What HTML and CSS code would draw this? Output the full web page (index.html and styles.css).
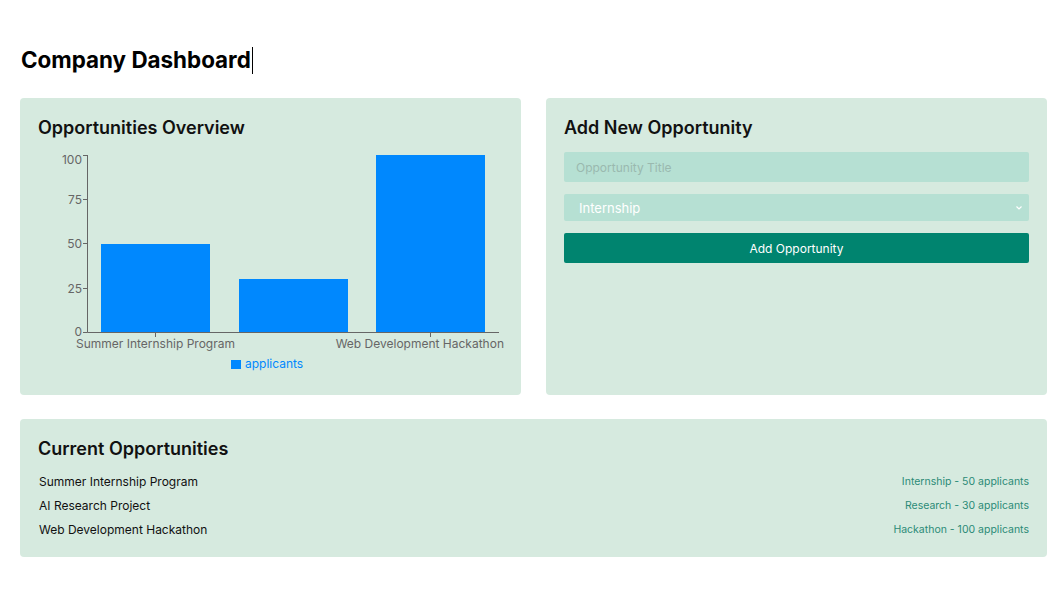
FILE: index.html
```html
<!DOCTYPE html>
<html>
<head>
<meta charset="utf-8">
<link rel="stylesheet" href="styles.css">
</head>
<body>
<div class="page">
  <h1 class="page-title">Company Dashboard<span class="caret"></span></h1>
  <div class="grid">
    <section class="card">
      <h2 class="card-title">Opportunities Overview</h2>
      <svg class="chart" width="470" height="230" viewBox="0 0 470 230">
        <g class="bars" fill="#0088fe">
          <rect x="63" y="99" width="109" height="88"/>
          <rect x="201" y="134" width="109" height="53"/>
          <rect x="338" y="10" width="109" height="177"/>
        </g>
        <g stroke="#666" stroke-width="1" fill="none">
          <line x1="49.5" y1="10" x2="49.5" y2="187.5"/>
          <line x1="49.5" y1="187.5" x2="461" y2="187.5"/>
          <line x1="45" y1="10.5" x2="49.5" y2="10.5"/>
          <line x1="45" y1="54.5" x2="49.5" y2="54.5"/>
          <line x1="45" y1="98.5" x2="49.5" y2="98.5"/>
          <line x1="45" y1="143.5" x2="49.5" y2="143.5"/>
          <line x1="45" y1="187.5" x2="49.5" y2="187.5"/>
          <line x1="117.5" y1="187.5" x2="117.5" y2="192"/>
          <line x1="392.5" y1="187.5" x2="392.5" y2="192"/>
        </g>
        <g class="tick" text-anchor="end">
          <text x="44" y="19">100</text>
          <text x="44" y="59">75</text>
          <text x="44" y="103">50</text>
          <text x="44" y="148">25</text>
          <text x="44" y="190.5">0</text>
        </g>
        <g class="tick">
          <text x="117.5" y="203" text-anchor="middle">Summer Internship Program</text>
          <text x="466" y="203" text-anchor="end">Web Development Hackathon</text>
        </g>
        <rect x="193" y="215" width="10" height="9" fill="#0088fe"/>
        <text class="legend" x="207" y="223">applicants</text>
      </svg>
    </section>
    <section class="card">
      <h2 class="card-title">Add New Opportunity</h2>
      <form class="form">
        <input class="field" type="text" placeholder="Opportunity Title">
        <div class="select">
          <span>Internship</span>
          <svg width="8" height="6" viewBox="0 0 8 6"><path d="M1.5 1.5 L4 4 L6.5 1.5" stroke="#fff" stroke-width="1.2" fill="none"/></svg>
        </div>
        <button class="btn" type="button">Add Opportunity</button>
      </form>
    </section>
  </div>
  <section class="card list-card">
    <h2 class="card-title">Current Opportunities</h2>
    <ul class="list">
      <li><span class="name">Summer Internship Program</span><span class="meta">Internship - 50 applicants</span></li>
      <li><span class="name">AI Research Project</span><span class="meta">Research - 30 applicants</span></li>
      <li><span class="name">Web Development Hackathon</span><span class="meta">Hackathon - 100 applicants</span></li>
    </ul>
  </section>
</div>
</body>
</html>
```

FILE: styles.css
```css
* { box-sizing: border-box; }
body {
  margin: 0;
  background: #fff;
  font-family: Inter, "Noto Sans", sans-serif;
  color: #111;
}
.page {
  width: 1047px;
  padding: 44px 0 0 20px;
}
.page-title {
  margin: 0 0 22px 1px;
  font-size: 22.4px;
  line-height: 32px;
  font-weight: 700;
  color: #000;
}
.caret {
  display: inline-block;
  width: 1px;
  height: 27px;
  margin-left: 1px;
  background: #000;
  vertical-align: -6px;
}
.grid {
  display: grid;
  grid-template-columns: 501px 501px;
  gap: 25px;
  margin-bottom: 24px;
}
.card {
  background: #d6eadf;
  border-radius: 4px;
  padding: 18px 18px 20px;
}
.card-title {
  margin: 0;
  font-size: 18px;
  line-height: 24px;
  font-weight: 600;
  color: #111;
}
.chart {
  display: block;
  margin-top: 5px;
}
.tick text, .tick {
  font-size: 12px;
  fill: #666;
}
.legend {
  font-size: 12px;
  fill: #0088fe;
}
.form {
  display: flex;
  flex-direction: column;
  margin-top: 12px;
}
.field {
  height: 30px;
  border: none;
  border-radius: 2px;
  background: #b6e0d3;
  padding: 0 12px;
  font-family: inherit;
  font-size: 12px;
  outline: none;
}
.field::placeholder { color: #9ab9af; }
.select {
  margin-top: 12px;
  height: 27px;
  border-radius: 2px;
  background: #b6e0d3;
  padding: 0 6px 0 15px;
  display: flex;
  align-items: center;
  justify-content: space-between;
  color: #fff;
  font-size: 13px;
}
.btn {
  margin-top: 12px;
  height: 30px;
  border: none;
  border-radius: 2px;
  background: #00846f;
  color: #fff;
  font-family: inherit;
  font-size: 12px;
}
.list-card {
  padding-bottom: 16px;
}
.list {
  list-style: none;
  margin: 8px 0 0;
  padding: 0 0 0 1px;
}
.list li {
  display: flex;
  justify-content: space-between;
  align-items: center;
  height: 24px;
}
.name {
  font-size: 12px;
  color: #111;
}
.meta {
  font-size: 10.5px;
  color: #2b8a77;
}
```
